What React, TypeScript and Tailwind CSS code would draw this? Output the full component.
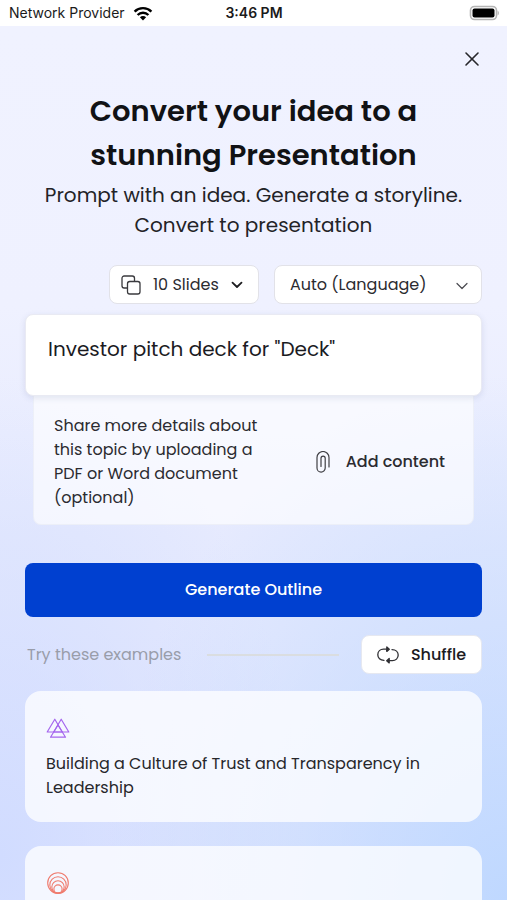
import type { ReactNode } from "react";
import { X } from "lucide-react";

function WifiIcon() {
  return (
    <svg viewBox="0 0 20 15" className="h-[15px] w-5" aria-hidden="true">
      <g fill="none" stroke="#000" strokeWidth="2.4">
        <path d="M1.6 5.6a12 12 0 0 1 16.8 0" />
        <path d="M4.6 9a7.6 7.6 0 0 1 10.8 0" />
      </g>
      <path d="M10 14.4 6.9 11.2a4.4 4.4 0 0 1 6.2 0z" fill="#000" />
    </svg>
  );
}

function BatteryIcon() {
  return (
    <svg viewBox="0 0 31 16" className="h-4 w-[31px]" aria-hidden="true">
      <rect x="2.500" y="1.500" width="26" height="13" rx="4" fill="#fff" stroke="#b5b5b5" strokeWidth="1.6" />
      <rect x="4.500" y="3.500" width="22" height="9" rx="2" fill="#000" />
      <path d="M29.600 5.700v4.6c.9-.4 1.300-1.200 1.300-2.300s-.4-1.900-1.300-2.300z" fill="#b5b5b5" />
    </svg>
  );
}

function CopyIcon() {
  return (
    <svg viewBox="0 0 20 20" className="h-5 w-5" fill="none" stroke="#3a3a3e" strokeWidth="1.3" aria-hidden="true">
      <path d="M6.500 13H3.200A2.200 2.200 0 0 1 1 10.800V3.200A2.200 2.200 0 0 1 3.200 1h8.100a2.200 2.200 0 0 1 2.200 2.200v3.300" />
      <rect x="6.500" y="6.500" width="12.500" height="12.500" rx="2.200" />
    </svg>
  );
}

function ChevronIcon({ bold }: { bold?: boolean }) {
  return (
    <svg viewBox="0 0 12 8" className="h-2 w-3" fill="none" stroke={bold ? "#1d1d20" : "#4a4a50"} strokeWidth={bold ? 1.8 : 1.2} strokeLinecap="round" strokeLinejoin="round" aria-hidden="true">
      <path d={bold ? "M1.500 1.700 6 6l4.500-4.300" : "M1 1.500 6 6.500l5-5"} />
    </svg>
  );
}

function ClipIcon() {
  return (
    <svg viewBox="0 0 14 22" className="h-[22px] w-3.5" fill="none" stroke="#3f3f44" strokeWidth="1.200" strokeLinecap="round" aria-hidden="true">
      <path d="M13 16V6.500a6 6 0 0 0-12 0V17a4.100 4.100 0 0 0 8.200 0V7.200a2.100 2.100 0 0 0-4.200 0V15.500" />
    </svg>
  );
}

function ShuffleIcon() {
  return (
    <svg viewBox="0 0 22 18" className="h-[18px] w-[22px]" fill="none" stroke="#303034" strokeWidth="1.300" strokeLinecap="round" strokeLinejoin="round" aria-hidden="true">
      <path d="M7 14.300C3.200 14.300.8 11.900.8 8.700S3.300 3.200 6.600 3.200H11" />
      <path d="M9.800 1 12.300 3.200 9.800 5.400z" fill="#303034" />
      <path d="M15 3.600c3.800 0 6.200 2.300 6.200 5.500s-2.500 5.600-5.800 5.600H11" />
      <path d="M12.200 12.500 9.700 14.700l2.500 2.200z" fill="#303034" />
    </svg>
  );
}

function TrianglesIcon() {
  return (
    <svg viewBox="0 0 24 20" className="h-5 w-6" fill="none" stroke="#a566ee" strokeWidth="1.200" strokeLinejoin="round" aria-hidden="true">
      <path d="M8.800 1.200 16.300 14H1.200z" />
      <path d="M15.200 1.200 22.800 14H7.700z" />
      <path d="M12 7 19.500 19.200H4.500z" />
    </svg>
  );
}

function RingsIcon() {
  return (
    <svg viewBox="0 0 24 24" className="h-6 w-6" fill="none" stroke="#ef7b6e" strokeWidth="1.100" aria-hidden="true">
      <circle cx="12" cy="12" r="10.300" />
      <circle cx="12" cy="14" r="8.200" />
      <circle cx="12" cy="15.900" r="6.200" />
      <circle cx="12" cy="18" r="4.100" />
    </svg>
  );
}

function ExampleCard({ icon, children }: { icon: ReactNode; children?: ReactNode }) {
  return (
    <button type="button" aria-label={children ? undefined : "Example"} className="flex min-h-[131px] w-full shrink-0 flex-col items-start rounded-2xl bg-white/75 px-[21px] pt-[25px] pb-5 text-left text-base leading-6 text-[#27272b]">
      <span className="flex h-6 items-center">{icon}</span>
      {children && <span className="mt-3">{children}</span>}
    </button>
  );
}

export default function App() {
  return (
    <div className="flex h-screen flex-col overflow-hidden bg-white font-[Poppins,Inter,sans-serif] text-[#1b1b1f]">
      <header className="grid h-[26px] shrink-0 grid-cols-[1fr_auto_1fr] items-center pr-2 pl-[9px] font-[Inter,sans-serif] text-sm leading-5 text-[#1b1b1b]">
        <span className="flex items-center gap-2">
          Network Provider
          <WifiIcon />
        </span>
        <span className="font-semibold">3:46 PM</span>
        <span className="flex justify-end">
          <BatteryIcon />
        </span>
      </header>

      <main className="flex min-h-0 flex-1 flex-col overflow-hidden bg-[radial-gradient(ellipse_80%_60%_at_100%_100%,#bfd8ff_0%,#bfd8ff00_100%),radial-gradient(ellipse_60%_55%_at_0%_95%,#d1dcff_0%,#d1dcff00_100%),linear-gradient(180deg,#f0f2ff_0%,#eff1ff_32%,#e6eafe_58%,#e2e6fe_100%)] px-[25px]">
        <div className="flex h-[63px] shrink-0 items-center justify-end pt-[3px]">
          <button type="button" aria-label="Close" className="flex h-5 w-5 items-center justify-center">
            <X className="h-6 w-6 shrink-0 text-[#27272b]" strokeWidth={1.6} />
          </button>
        </div>

        <h1 className="text-center text-[29px] leading-11 font-semibold text-[#111215]">
          Convert your idea to a<br />
          stunning Presentation
        </h1>
        <p className="mt-[3px] text-center text-xl leading-[30px] text-[#232327]">
          Prompt with an idea. Generate a storyline.
          <br />
          Convert to presentation
        </p>

        <div className="mt-[25px] flex shrink-0 justify-end gap-[15px]">
          <div className="relative">
            <span className="pointer-events-none absolute inset-y-0 left-3 flex items-center">
              <CopyIcon />
            </span>
            <select aria-label="Number of slides" className="h-[39px] w-[150px] appearance-none rounded-lg border border-[#e2e2e8] bg-white pl-[43px] text-base text-[#2b2b30]">
              <option>10 Slides</option>
            </select>
            <span className="pointer-events-none absolute inset-y-0 right-4 flex items-center">
              <ChevronIcon bold />
            </span>
          </div>
          <div className="relative">
            <select aria-label="Language" className="h-[39px] w-52 appearance-none rounded-lg border border-[#e2e2e8] bg-white pl-[15px] text-base text-[#2b2b30]">
              <option>Auto (Language)</option>
            </select>
            <span className="pointer-events-none absolute inset-y-0 right-3.5 flex items-center pt-0.5">
              <ChevronIcon />
            </span>
          </div>
        </div>

        <textarea
          aria-label="Presentation idea"
          defaultValue={'Investor pitch deck for "Deck"'}
          className="relative mt-2.5 block h-[82px] w-full shrink-0 resize-none overflow-hidden rounded-lg border border-[#e9eaf3] bg-white px-[22px] pt-[19px] text-xl leading-[30px] shadow-[0_2px_6px_rgba(60,70,120,0.12)] outline-none"
        />
        <section className="mx-2 flex shrink-0 items-center justify-between rounded-b-lg border border-t-0 border-[#e6e9f4]/60 bg-white/65 pt-[18px] pr-7 pb-3.5 pl-5 text-base leading-6 text-[#2b2b30]">
          <p>
            Share more details about
            <br />
            this topic by uploading a
            <br />
            PDF or Word document
            <br />
            (optional)
          </p>
          <button type="button" className="flex items-center gap-4 font-medium">
            <ClipIcon />
            Add content
          </button>
        </section>

        <button type="button" className="mt-[38px] h-[54px] w-full shrink-0 rounded-lg bg-[#0040d0] text-base font-medium text-white">
          Generate Outline
        </button>

        <div className="mt-[18px] flex shrink-0 items-center">
          <h2 className="pl-0.5 text-base leading-6 text-[#999daa]">Try these examples</h2>
          <hr className="mr-[22px] ml-[26px] flex-1 border-t-2 border-[#dadde0]" />
          <button type="button" className="flex h-[39px] w-[121px] items-center justify-center gap-3 rounded-lg border border-[#e6e8f0] bg-white text-base font-medium">
            <ShuffleIcon />
            Shuffle
          </button>
        </div>

        <div className="mt-[17px] flex shrink-0 flex-col gap-6">
          <ExampleCard icon={<TrianglesIcon />}>
            Building a Culture of Trust and Transparency in Leadership
          </ExampleCard>
          <ExampleCard icon={<RingsIcon />} />
        </div>
      </main>
    </div>
  );
}
